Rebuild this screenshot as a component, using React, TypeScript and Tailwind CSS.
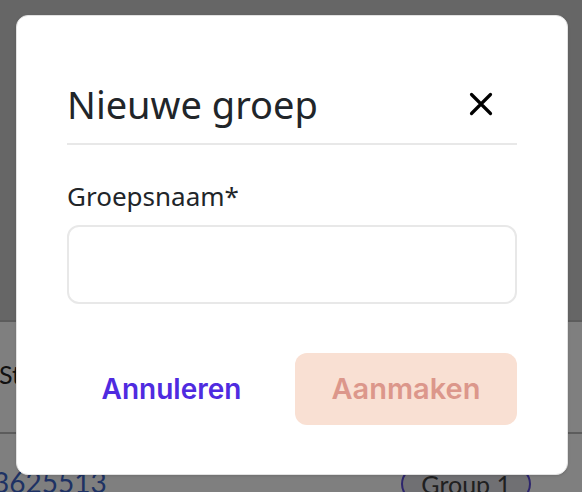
import { useState } from 'react';

const NewGroupModal = () => {
    const [name, setName] = useState('');

    return (
        <div className="absolute left-[16px] top-[15px] w-[552px] rounded-xl border border-[#e2e2e2] bg-white px-[50px] pt-[68px] pb-[49px] shadow-sm">
            {/* Header */}
            <div className="flex h-[40px] items-center justify-between">
                <h2 className="font-['Noto_Sans',sans-serif] text-[38px] leading-[40px] text-[#212529]">
                    Nieuwe groep
                </h2>
                <button className="mr-[24px] flex h-[24px] w-[24px] items-center justify-center text-black">
                    <svg width="24" height="24" viewBox="0 0 24 24" fill="none" stroke="currentColor" strokeWidth="3.2" strokeLinecap="round">
                        <path d="M2.5 2.5L21.5 21.5M21.5 2.5L2.5 21.5" />
                    </svg>
                </button>
            </div>
            <div className="mt-[19px] h-[2px] bg-[#e8e8e8]" />

            {/* Form */}
            <label className="mt-[37px] block font-['Noto_Sans',sans-serif] text-[26px] leading-[28px] text-[#212529]">
                Groepsnaam*
            </label>
            <input
                value={name}
                onChange={(e) => setName(e.target.value)}
                className="mt-[15px] block h-[79px] w-full rounded-xl border-2 border-[#e8e8e8] px-4 outline-none"
            />

            {/* Actions */}
            <div className="mt-[49px] flex gap-[19px]">
                <button className="flex h-[72px] w-[210px] items-center justify-center font-['Inter',sans-serif] text-[28px] font-semibold text-[#4f2be0]">
                    Annuleren
                </button>
                <button
                    disabled
                    className="flex h-[72px] w-[223px] items-center justify-center rounded-xl bg-[#f9e0d3] font-['Inter',sans-serif] text-[29px] font-semibold text-[#dc978b]"
                >
                    Aanmaken
                </button>
            </div>
        </div>
    );
};

const App = () => {
    return (
        <div className="relative h-[492px] w-[582px] overflow-hidden bg-[#cccccc] font-['Lato',sans-serif]">
            {/* Page underneath */}
            <div className="pt-[320px]">
                <div className="h-[112px] border-t-2 border-[#b8b8b8] bg-white">
                    <div className="-ml-[1px] pt-[38px] text-[25px] leading-[28px] text-[#222]">Status</div>
                </div>
                <div className="flex h-[60px] items-start justify-between border-t-2 border-[#b8b8b8] bg-white pt-[32px]">
                    <span className="-ml-[7px] text-[28px] leading-[32px] text-[#3c64c8]">3625513</span>
                    <span className="mr-[51px] rounded-full border-2 border-[#5b4bd8] bg-[#e0e0e6] px-[18px] text-[25px] leading-[32px] text-[#404040]">
                        Group 1
                    </span>
                </div>
            </div>

            {/* Overlay */}
            <div className="absolute inset-0 bg-black/50" />

            <NewGroupModal />
        </div>
    );
};

export default App;
